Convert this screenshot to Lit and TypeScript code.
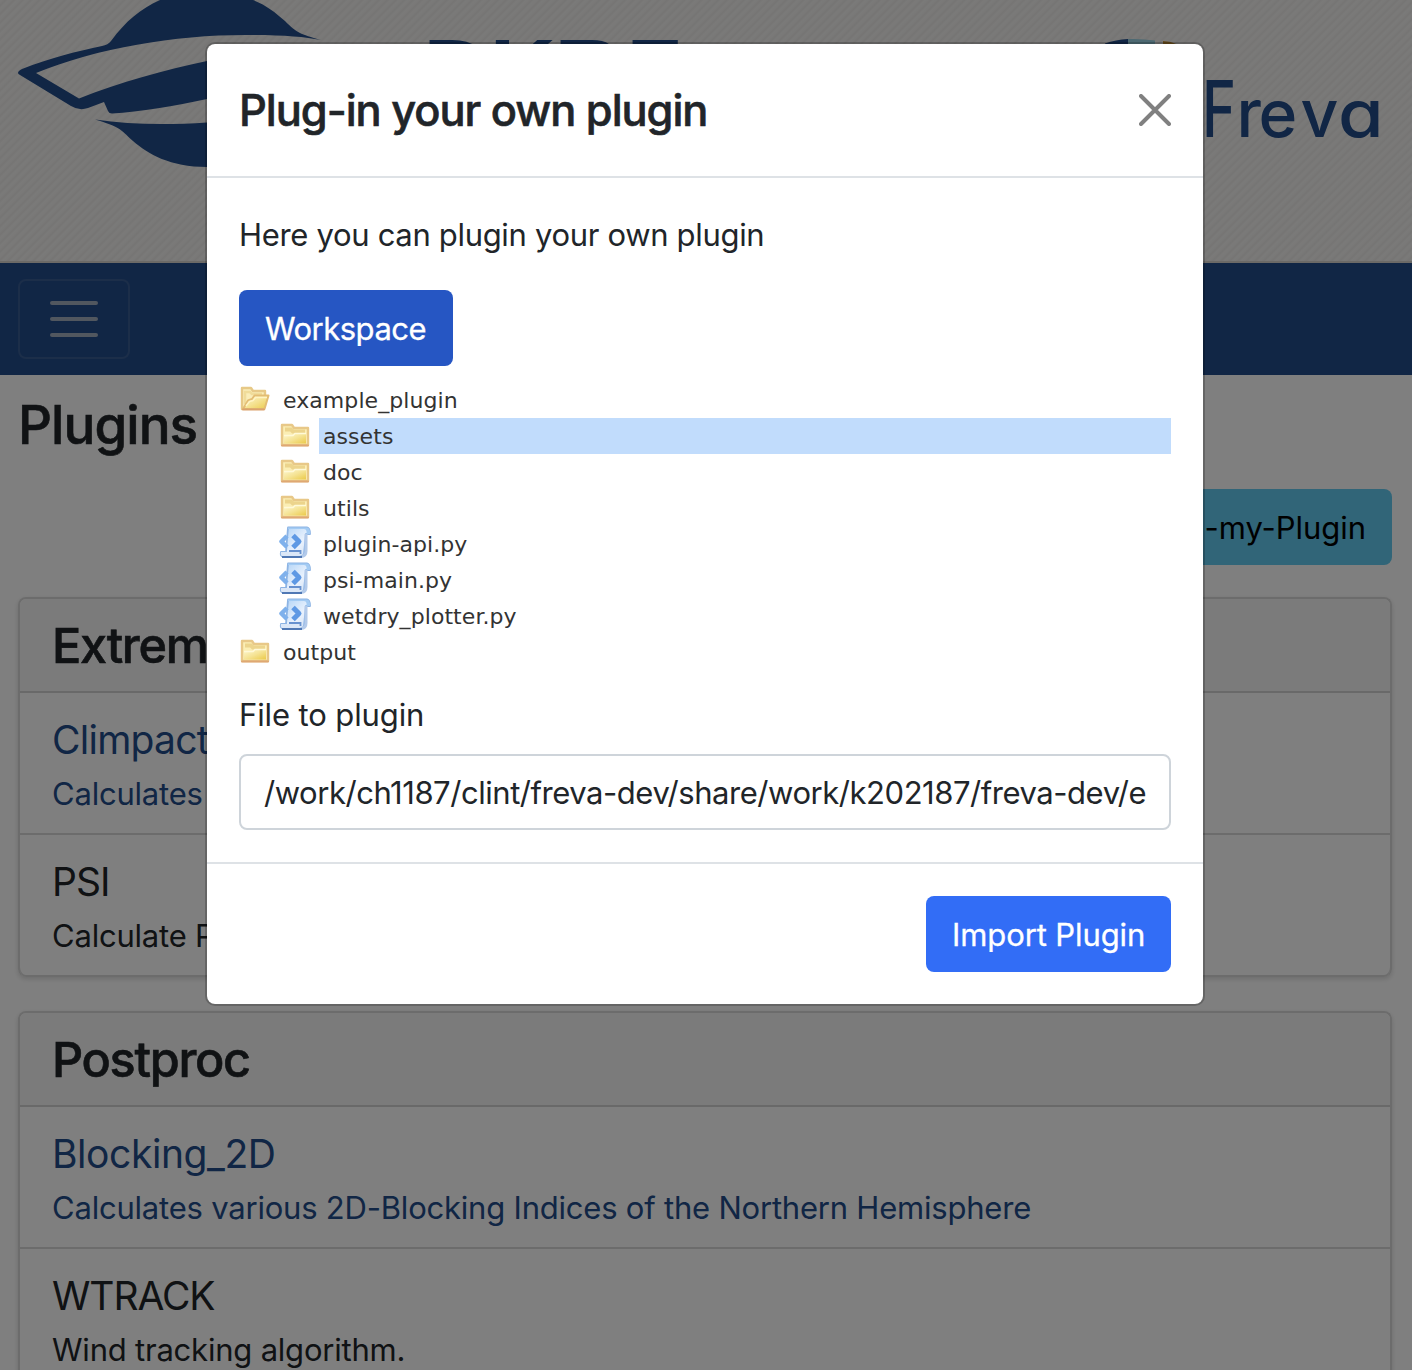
import { LitElement, html, css, svg } from "lit";
import { customElement } from "lit/decorators.js";
import { styleMap } from "lit/directives/style-map.js";

type Kind = "open" | "folder" | "script";

interface TreeNode {
  name: string;
  kind: Kind;
  selected?: boolean;
  children?: TreeNode[];
}

interface Plugin {
  name: string;
  text: string;
  link: boolean;
  tracking: number;
}

const TREE: TreeNode[] = [
  {
    name: "example_plugin",
    kind: "open",
    children: [
      { name: "assets", kind: "folder", selected: true },
      { name: "doc", kind: "folder" },
      { name: "utils", kind: "folder" },
      { name: "plugin-api.py", kind: "script" },
      { name: "psi-main.py", kind: "script" },
      { name: "wetdry_plotter.py", kind: "script" },
    ],
  },
  { name: "output", kind: "folder" },
];

const GROUPS: { title: string; plugins: Plugin[] }[] = [
  {
    title: "Extremes",
    plugins: [
      { name: "Climpact", text: "Calculates", link: true, tracking: -0.75 },
      { name: "PSI", text: "Calculate PSI", link: false, tracking: -1 },
    ],
  },
  {
    title: "Postproc",
    plugins: [
      {
        name: "Blocking_2D",
        text: "Calculates various 2D-Blocking Indices of the Northern Hemisphere",
        link: true,
        tracking: -0.42,
      },
      { name: "WTRACK", text: "Wind tracking algorithm.", link: false, tracking: -1.1 },
    ],
  },
];

@customElement("tree-icon")
export class TreeIcon extends LitElement {
  static properties = { kind: { type: String } };
  declare kind: Kind;

  static styles = css`
    :host { display: block; width: 32px; height: 32px; }
    svg { display: block; }
    .soft { filter: blur(.6px); }
  `;

  private closed() {
    return svg`
      <path d="M3 7H13L15 10H29V27H3Z" fill="#fbeeb4" stroke="#e8c888" stroke-width="2.400" stroke-linejoin="round"/>
      <path d="M3 27.500H29" stroke="#dfa873" stroke-width="2" stroke-linecap="round"/>
      <path d="M6 11.500H12L14 13.500H26" fill="none" stroke="#ecd48c" stroke-width="4"/>
      <path d="M5 18H14L16 16H27V25.500H5Z" fill="url(#g)"/>
      <path d="M5 17.500H14L16 15.500H27" fill="none" stroke="#fff9d8" stroke-width="1.500"/>`;
  }

  private opened() {
    return svg`
      <path d="M3 27V6H12L14 9H26V13L22 20Z" fill="#faedb9" stroke="#e7c987" stroke-width="2.400" stroke-linejoin="round"/>
      <path d="M6 22V10H11L13 12H23" fill="none" stroke="#f0dc9a" stroke-width="2.500"/>
      <path d="M4 27L9 18.500L13 17L15.500 13.500H29.500L25.500 27Z" fill="url(#g)" stroke="#e3bd74" stroke-width="2" stroke-linejoin="round"/>
      <path d="M7 24L10.500 19.500L14 18.500L16.500 15.500H28" fill="none" stroke="#fff4c4" stroke-width="1.500"/>
      <path d="M4 27.500H25" stroke="#dba26c" stroke-width="1.800" stroke-linecap="round"/>`;
  }

  private script() {
    return svg`
      <path d="M9 1.500H28Q31 2 31 8H27L25 28Q24 30.500 21 30.500H4Q1 30 2 26H7Z" fill="url(#p)" stroke="#8db4e4" stroke-width="1.800" stroke-linejoin="round"/>
      <path d="M9 1.500H28Q31.500 2 31 8H27.500V5Q27 3 25 3H9Z" fill="#a3cbf3"/>
      <path d="M27 8V25Q27 29.500 23 30.500" fill="none" stroke="#b3caea" stroke-width="3"/>
      <path d="M2 26H21V28Q21 30 23 30.500H5Q1 30.500 2 26Z" fill="#dbe7f7"/>
      <path d="M10 25H21.500V28" fill="none" stroke="#6791cf" stroke-width="1.800"/>
      <path d="M3 31H23" stroke="#5078b4" stroke-width="2"/>
      <path d="M8 10L2.500 15.500L8 21" fill="none" stroke="#7fb1ec" stroke-width="4.500" stroke-linejoin="round"/>
      <path d="M14 9.500L20 15.500L14 21.500" fill="none" stroke="#5f99e4" stroke-width="5" stroke-linejoin="round"/>`;
  }

  render() {
    const art =
      this.kind === "open" ? this.opened() : this.kind === "folder" ? this.closed() : this.script();
    return html`<svg width="32" height="32" viewBox="0 0 32 32">
      <defs>
        <linearGradient id="g" x1="0" y1="0" x2="1" y2="1">
          <stop offset="0" stop-color="#fdf6cf" />
          <stop offset=".5" stop-color="#f5e394" />
          <stop offset="1" stop-color="#ebca4a" />
        </linearGradient>
        <linearGradient id="p" x1="0" y1="0" x2="1" y2="1">
          <stop offset="0" stop-color="#a9cff6" />
          <stop offset=".6" stop-color="#eaf2fd" />
          <stop offset="1" stop-color="#cfdff3" />
        </linearGradient>
      </defs>
      <g class="soft">${art}</g>
    </svg>`;
  }
}

@customElement("site-banner")
export class SiteBanner extends LitElement {
  static styles = css`
    :host {
      display: block;
      height: 263px;
      border-bottom: 2px solid #d8d5cf;
      background: repeating-linear-gradient(135deg, #f5f4f2 0, #f3f2f0 2px, #eceae8 4px, #f0efed 5px, #f5f4f2 6px);
    }
    svg { display: block; }
    .navy { fill: #224c8a; }
    .org { font: 700 80px "Liberation Sans", Arial, sans-serif; }
    .brand { font-family: Inter, sans-serif; font-feature-settings: "cv11"; }
    .cap { font-size: 78px; font-weight: 500; }
    .low { font-size: 66px; font-weight: 500; }
  `;

  render() {
    return html`<svg width="1412" height="261" viewBox="0 0 1412 261">
      <path
        class="navy"
        d="M18 73Q18 71 22 69C50 58 78 51 102 46Q108 45 111 41C126 21 140 9 160 0H253C266 5 275 12 285 21C297 33 300 34 321 40C305 37 285 35 253 35C180 34 100 47 36 73L79 98.500C120 82 165 70 207 61H260V90L207 99C175 106 140 112 112 113.500Q109 113.500 108 111L104 102L88 108Q79 111 71 106L20 75Q18 74 18 73Z"
      />
      <path
        class="navy"
        d="M95 119.500C130 125 170 125 207 122.500H260V167H207C170 167 148 154 133 141C119 128 120 127 95 119.500Z"
      />
      <text class="navy org" transform="scale(1.140 1)" x="371.500 429.500 486.500 549.500" y="95.500">DKRZ</text>
      <path d="M1105 43.500C1112 41 1120 39.500 1128 39V52H1105Z" class="navy" />
      <path d="M1128 39Q1142 38.500 1155 40.500V52H1128Z" fill="#9ad2e4" />
      <path d="M1163 41Q1172 41.500 1176 44V52H1163Z" fill="#c79336" />
      <g class="navy brand">
        <text class="cap" transform="translate(1202 137) scale(.740 1)">F</text>
        <text class="low" x="1236.500 1258.500 1300.500" y="137">rev</text>
        <text class="low" transform="translate(1338 137) scale(1.120 1)">a</text>
      </g>
    </svg>`;
  }
}

@customElement("app-root")
export class AppRoot extends LitElement {
  static styles = css`
    :host {
      display: block;
      position: relative;
      height: 1370px;
      overflow: hidden;
      background: #fff;
      color: #212529;
      font: 400 31px/48px Inter, sans-serif;
    }
    * { box-sizing: border-box; }
    h1, h2, h3, p { margin: 0; font-weight: 500; }
    h1, h2 { -webkit-text-stroke: .6px currentColor; }
    p { font-weight: 400; }

    .nav { height: 112px; padding: 16px 18px; background: #224c8a; }
    .toggler {
      display: flex; flex-direction: column; align-items: center; justify-content: center; gap: 12px;
      width: 112px; height: 80px;
      border: 2px solid #385c93; border-radius: 8px;
    }
    .toggler i { width: 48px; height: 4px; border-radius: 2px; background: #a2aebf; }

    .page { display: flex; flex-direction: column; padding: 17px 20px 0 18px; }
    .page h1 { font-size: 53px; line-height: 66px; letter-spacing: -.950px; }
    .actions { display: flex; justify-content: flex-end; padding: 31px 0 32px; }
    .btn {
      display: flex; align-items: center; height: 76px; padding: 2px 26px 0;
      border-radius: 8px; color: #fff; white-space: nowrap;
    }
    .btn.info { background: #62caf0; color: #000; letter-spacing: -.05px; }
    .btn.work { background: #2656c3; letter-spacing: -.5px; -webkit-text-stroke: .3px currentColor; }
    .btn.import { width: 245px; background: #326df6; letter-spacing: -.1px; -webkit-text-stroke: .3px currentColor; }

    .card {
      margin-bottom: 34px; padding-bottom: 2px;
      border: 2px solid #d8d8d8; border-bottom: 0; border-radius: 8px;
      box-shadow: inset 0 -2px 0 #d8d8d8, 0 2px 5px rgba(0, 0, 0, .15);
    }
    .card h2 {
      height: 94px; padding: 1px 32px 0; border-bottom: 2px solid #d2d2d2;
      border-radius: 6px 6px 0 0;
      background: #f7f7f7; font-size: 48.600px; line-height: 92px; letter-spacing: -1.300px;
    }
    .item { padding: 16px 32px 15px; }
    .item + .item { border-top: 2px solid #d8d8d8; }
    .item h3 { font-size: 39px; line-height: 61px; font-weight: 400; }
    .item p { letter-spacing: -.21px; }
    .item.link { color: #224c8a; }

    .backdrop { position: absolute; inset: 0; background: rgba(0, 0, 0, .5); }
    .modal {
      position: absolute; left: 205px; top: 42px; width: 1000px;
      border: 2px solid rgba(0, 0, 0, .2); border-radius: 10px;
      background: #fff; background-clip: padding-box;
    }
    .head {
      display: flex; align-items: center; justify-content: space-between;
      height: 134px; padding: 0 32px; border-bottom: 2px solid #dee2e6;
    }
    .head h2 { font-size: 43.400px; letter-spacing: -1.030px; }
    .head svg { display: block; }
    .body { display: flex; flex-direction: column; align-items: stretch; padding: 33px 32px 32px; }
    .body .intro { letter-spacing: -.32px; }
    .body .work { align-self: flex-start; width: 214px; margin: 31px 0 16px; }
    .tree { color: #333; font: 22px/36px "DejaVu Sans", Verdana, sans-serif; letter-spacing: .07px; }
    .row { display: flex; height: 36px; }
    .row span { flex: 1; margin-left: 8px; padding: 1px 0 0 4px; }
    .row.on span { background: #c1dcfc; }
    .kids { padding-left: 40px; }
    .body label { margin: 21px 0 15px; letter-spacing: -.12px; }
    .field {
      height: 76px; padding: 1px 23px 0; line-height: 72px;
      border: 2px solid #ced4da; border-radius: 8px;
      white-space: nowrap; overflow: hidden; letter-spacing: -.455px;
    }
    .foot { display: flex; justify-content: flex-end; padding: 32px; border-top: 2px solid #dee2e6; }
  `;

  private node(n: TreeNode): unknown {
    return html`
      <div class="row ${n.selected ? "on" : ""}">
        <tree-icon .kind=${n.kind}></tree-icon><span>${n.name}</span>
      </div>
      ${n.children ? html`<div class="kids">${n.children.map((c) => this.node(c))}</div>` : ""}
    `;
  }

  render() {
    return html`
      <site-banner></site-banner>
      <div class="nav"><div class="toggler"><i></i><i></i><i></i></div></div>
      <div class="page">
        <h1>Plugins</h1>
        <div class="actions"><div class="btn info">Plug-my-Plugin</div></div>
        ${GROUPS.map(
          (g) => html`<section class="card">
            <h2>${g.title}</h2>
            ${g.plugins.map(
              (p) => html`<div class="item ${p.link ? "link" : ""}">
                <h3 style=${styleMap({ letterSpacing: `${p.tracking}px` })}>${p.name}</h3>
                <p>${p.text}</p>
              </div>`
            )}
          </section>`
        )}
      </div>
      <div class="backdrop"></div>
      <div class="modal">
        <div class="head">
          <h2>Plug-in your own plugin</h2>
          <svg width="32" height="32" viewBox="0 0 32 32">
            <path d="M2 2L30 30M30 2L2 30" stroke="#808080" stroke-width="4" stroke-linecap="round" />
          </svg>
        </div>
        <div class="body">
          <p class="intro">Here you can plugin your own plugin</p>
          <div class="btn work">Workspace</div>
          <div class="tree">${TREE.map((n) => this.node(n))}</div>
          <label>File to plugin</label>
          <div class="field">/work/ch1187/clint/freva-dev/share/work/k202187/freva-dev/e</div>
        </div>
        <div class="foot"><div class="btn import">Import Plugin</div></div>
      </div>
    `;
  }
}
